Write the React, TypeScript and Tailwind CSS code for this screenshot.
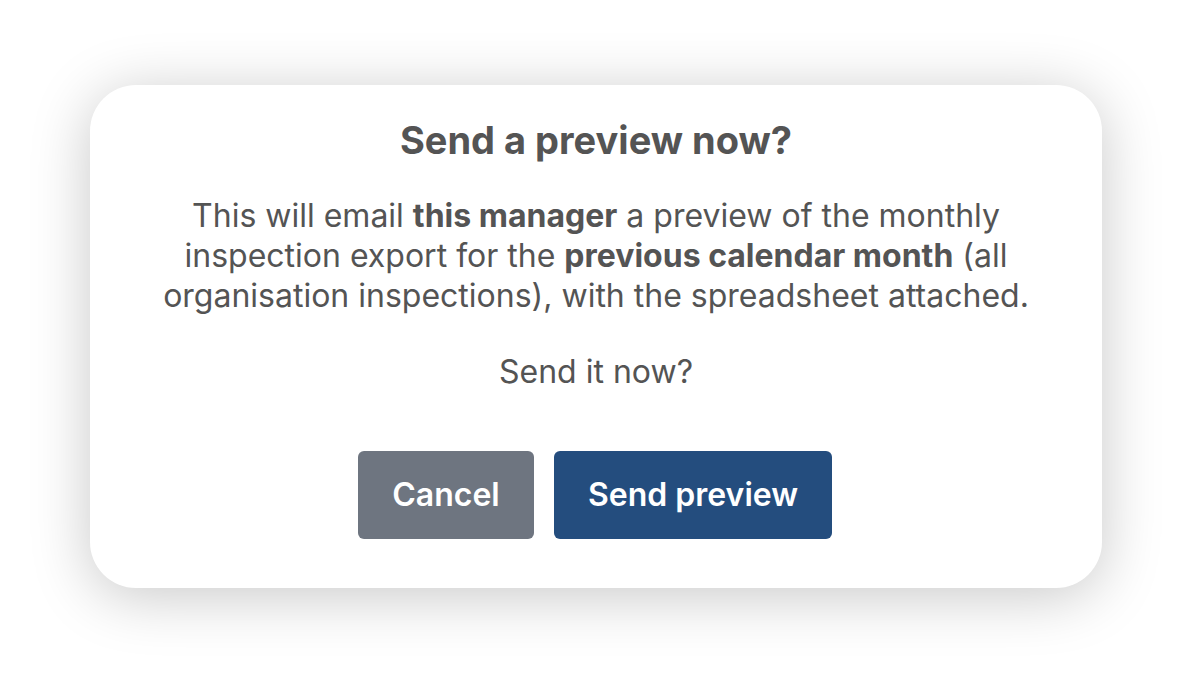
export default function App() {
  return (
    <div className="w-[1187px] h-[678px] bg-white flex items-start justify-center pt-[85px] pl-[5px] font-['Inter','Liberation_Sans',sans-serif]">
      <div className="w-[1012px] h-[503px] bg-white rounded-[46px] shadow-[0_8px_60px_rgba(0,0,0,0.22)] flex flex-col items-center pt-[33px] px-10">
        <h2 className="text-[38px] leading-[44px] font-bold text-[#545454]">Send a preview now?</h2>
        <p className="mt-[34px] text-[32px] leading-[40px] text-[#545454] text-center">
          This will email <b className="font-bold">this manager</b> a preview of the monthly
          <br />
          inspection export for the <b className="font-bold">previous calendar month</b> (all
          <br />
          organisation inspections), with the spreadsheet attached.
        </p>
        <p className="mt-[36px] text-[32px] leading-[40px] text-[#545454] text-center">Send it now?</p>
        <div className="mt-[59px] flex gap-5 -ml-[2px]">
          <button className="w-[176px] h-[88px] rounded-[6px] bg-[#6e7580] text-white text-[32px] font-semibold">
            Cancel
          </button>
          <button className="w-[278px] h-[88px] rounded-[6px] bg-[#244d7e] text-white text-[32px] font-semibold">
            Send preview
          </button>
        </div>
      </div>
    </div>
  );
}
